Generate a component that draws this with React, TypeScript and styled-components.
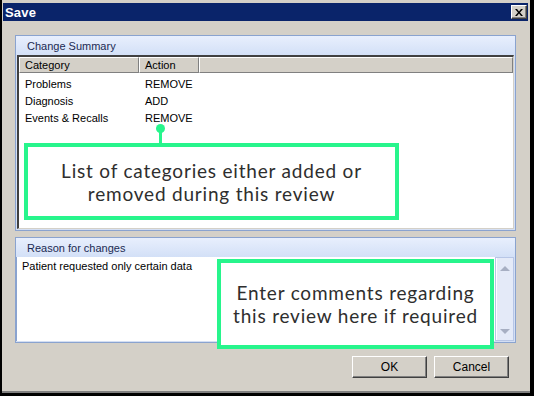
import React from 'react'
import styled, { createGlobalStyle } from 'styled-components'

const Global = createGlobalStyle`
  html, body { margin: 0; padding: 0; background: #000; }
  * { box-sizing: border-box; }
`

const Window = styled.div`
  position: relative;
  width: 534px;
  height: 396px;
  background: #000;
  padding: 0 4px 3px 2px;
  font-family: "Liberation Sans", Arial, sans-serif;
`

const Dialog = styled.div`
  display: flex;
  flex-direction: column;
  height: 100%;
  background: #d4d0c8;
  padding: 3px 2px 0 1px;
  border-bottom: 2px solid #808080;
`

const TitleBar = styled.div`
  display: flex;
  align-items: center;
  justify-content: space-between;
  height: 18px;
  background: #0a246a;
  padding: 0 1px 0 2px;
`

const Title = styled.div`
  color: #fff;
  font-weight: bold;
  font-size: 13px;
  letter-spacing: 0.2px;
`

const CloseButton = styled.div`
  width: 16px;
  height: 14px;
  background: #d4d0c8;
  border: 1px solid;
  border-color: #fff #404040 #404040 #fff;
  box-shadow: inset -1px -1px 0 #808080;
  display: flex;
  align-items: center;
  justify-content: center;
`

const Content = styled.div`
  display: flex;
  flex-direction: column;
  padding: 14px 12px 0 12px;
`

const Group = styled.div<{ $h: number; $mt?: number }>`
  display: flex;
  flex-direction: column;
  height: ${p => p.$h}px;
  margin-top: ${p => p.$mt ?? 0}px;
  border: 1px solid #8aa3cf;
  background: #d4dff4;
`

const GroupHeader = styled.div`
  height: 19px;
  flex: none;
  display: flex;
  align-items: center;
  padding-left: 11px;
  font-size: 11px;
  color: #1b2a52;
  background: linear-gradient(#e8effd, #d3e0f7);
`

const ListView = styled.div`
  flex: 1;
  margin: 0 1px 1px 1px;
  background: #fff;
  border-top: 2px solid #404040;
  border-left: 2px solid #404040;
  border-right: 1px solid #d4d0c8;
  border-bottom: 1px solid #d4d0c8;
`

const HeaderRow = styled.div`
  display: flex;
  height: 16px;
  background: #d4d0c8;
`

const HeaderCell = styled.div<{ $w?: number }>`
  ${p => (p.$w ? `width: ${p.$w}px; flex: none;` : 'flex: 1;')}
  border-top: 1px solid #fff;
  border-left: 1px solid #fff;
  border-right: 1px solid #808080;
  border-bottom: 1px solid #808080;
  font-size: 11px;
  color: #000;
  padding-left: 5px;
  line-height: 14px;
`

const Rows = styled.div`
  padding-top: 2px;
`

const Row = styled.div`
  display: flex;
  height: 17px;
  align-items: center;
  font-size: 11px;
  color: #000;
`

const Cell = styled.div<{ $w: number }>`
  width: ${p => p.$w}px;
  padding-left: 6px;
`

const TextArea = styled.div`
  flex: 1;
  display: flex;
  margin: 0 1px 1px 0;
  background: #fff;
  border-left: 1px solid #8aa3cf;
`

const TextBody = styled.div`
  flex: 1;
  font-size: 11px;
  color: #000;
  padding: 3px 0 0 5px;
`

const ScrollBar = styled.div`
  width: 19px;
  display: flex;
  flex-direction: column;
  justify-content: space-between;
  align-items: center;
  background: #e4eaf8;
  border: 1px solid #b7c6e6;
  box-shadow: inset 1px 0 0 #fff;
  padding: 8px 0 6px;
`

const Arrow = styled.div<{ $up?: boolean }>`
  width: 0;
  height: 0;
  border-left: 5px solid transparent;
  border-right: 5px solid transparent;
  ${p => (p.$up ? 'border-bottom: 5px solid #a7afc3;' : 'border-top: 5px solid #a7afc3;')}
`

const ButtonRow = styled.div`
  display: flex;
  justify-content: flex-end;
  gap: 7px;
  padding: 13px 19px 0 0;
`

const Button = styled.div`
  width: 75px;
  height: 22px;
  display: flex;
  align-items: center;
  justify-content: center;
  font-size: 12px;
  color: #000;
  background: #d4d0c8;
  border: 1px solid;
  border-color: #fff #404040 #404040 #fff;
  box-shadow: inset -1px -1px 0 #808080;
`

const Callout = styled.div<{ $x: number; $y: number; $w: number; $h: number }>`
  position: absolute;
  left: ${p => p.$x}px;
  top: ${p => p.$y}px;
  width: ${p => p.$w}px;
  height: ${p => p.$h}px;
  border: 4px solid #27f58c;
  background: #fff;
  display: flex;
  align-items: center;
  justify-content: center;
  text-align: center;
  font-family: Lato, "DejaVu Sans", sans-serif;
  font-size: 19px;
  letter-spacing: 0.8px;
  line-height: 23px;
  color: #2e2e2e;
`

const Stem = styled.div`
  position: absolute;
  left: 159px;
  top: 128px;
  width: 3px;
  height: 16px;
  background: #27f58c;
`

const Dot = styled.div`
  position: absolute;
  left: 156px;
  top: 124px;
  width: 9px;
  height: 9px;
  border-radius: 50%;
  background: #27f58c;
`

const items = [
  ['Problems', 'REMOVE'],
  ['Diagnosis', 'ADD'],
  ['Events & Recalls', 'REMOVE'],
]

export default function App() {
  return (
    <Window>
      <Global />
      <Dialog>
        <TitleBar>
          <Title>Save</Title>
          <CloseButton>
            <svg width="8" height="7" viewBox="0 0 8 7">
              <path d="M0 0h2l2 2.5L6 0h2L5 3.5 8 7H6L4 4.5 2 7H0l3-3.5z" fill="#000" />
            </svg>
          </CloseButton>
        </TitleBar>
        <Content>
          <Group $h={196}>
            <GroupHeader>Change Summary</GroupHeader>
            <ListView>
              <HeaderRow>
                <HeaderCell $w={120}>Category</HeaderCell>
                <HeaderCell $w={60}>Action</HeaderCell>
                <HeaderCell />
              </HeaderRow>
              <Rows>
                {items.map(([c, a]) => (
                  <Row key={c}>
                    <Cell $w={120}>{c}</Cell>
                    <Cell $w={60}>{a}</Cell>
                  </Row>
                ))}
              </Rows>
            </ListView>
          </Group>
          <Group $h={106} $mt={6}>
            <GroupHeader>Reason for changes</GroupHeader>
            <TextArea>
              <TextBody>Patient requested only certain data</TextBody>
              <ScrollBar>
                <Arrow $up />
                <Arrow />
              </ScrollBar>
            </TextArea>
          </Group>
        </Content>
        <ButtonRow>
          <Button>OK</Button>
          <Button>Cancel</Button>
        </ButtonRow>
      </Dialog>
      <Dot />
      <Stem />
      <Callout $x={24} $y={143} $w={375} $h={77}>
        List of categories either added or
        <br />
        removed during this review
      </Callout>
      <Callout $x={217} $y={259} $w={277} $h={90}>
        Enter comments regarding
        <br />
        this review here if required
      </Callout>
    </Window>
  )
}
